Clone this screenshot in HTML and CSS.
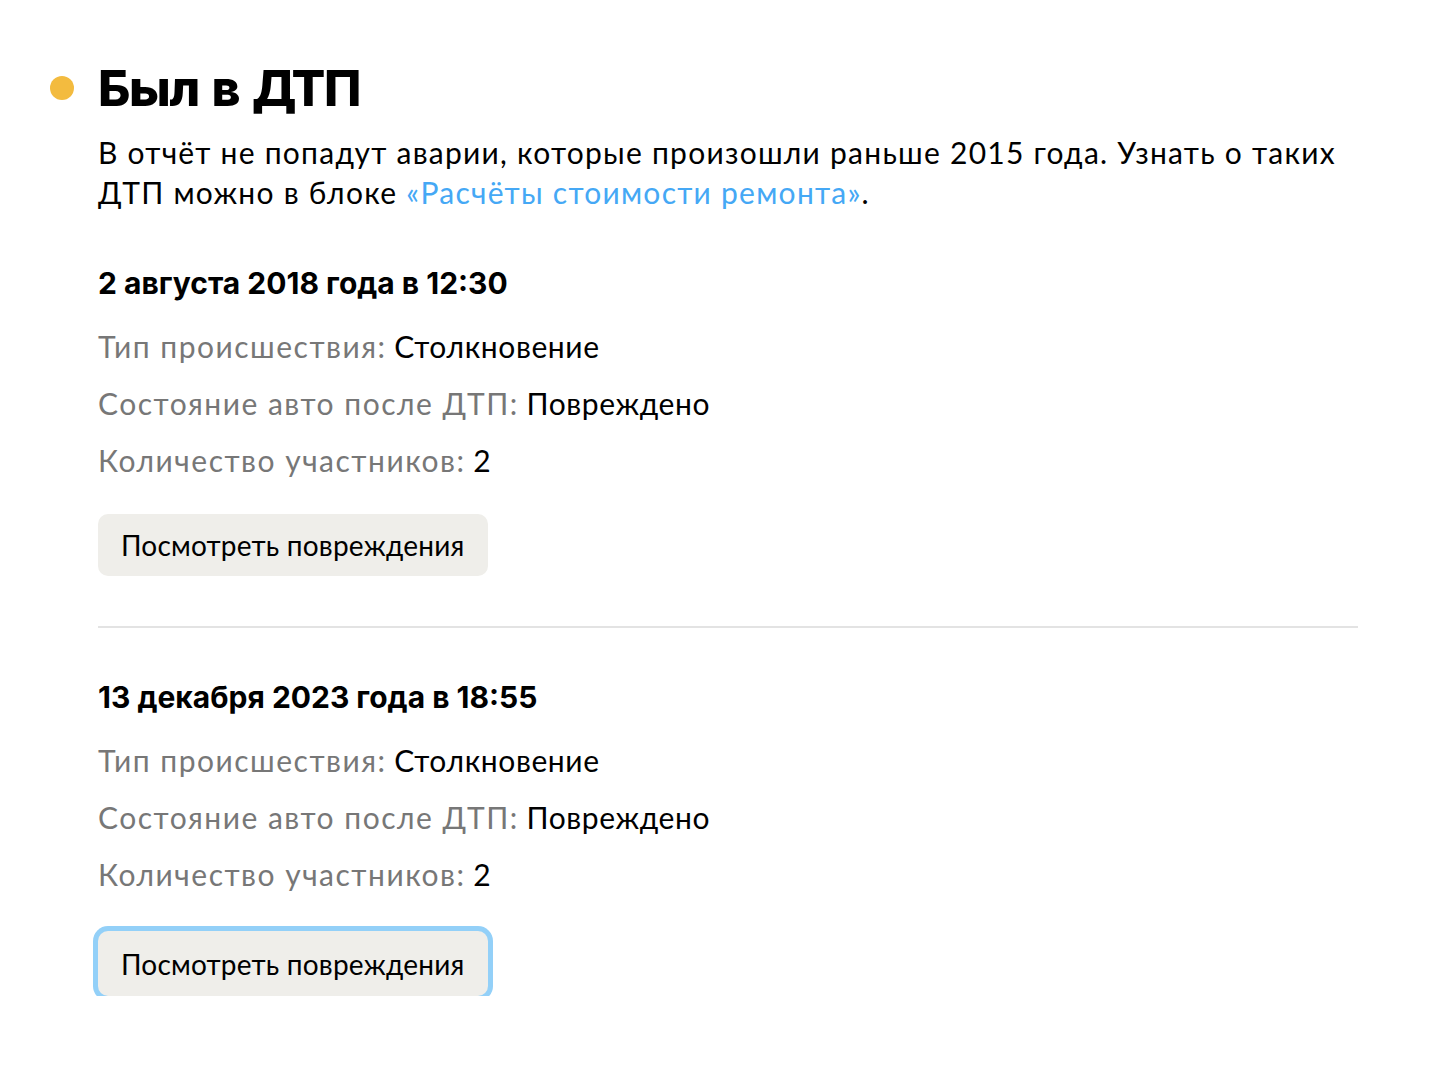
FILE: index.html
```html
<!DOCTYPE html>
<html lang="ru">
<head>
<meta charset="utf-8">
<link rel="stylesheet" href="styles.css">
</head>
<body>
<section class="block">
  <div class="title-row">
    <span class="dot"></span>
    <h1 class="title">Был в ДТП</h1>
  </div>
  <div class="content">
    <p class="intro">В отчёт не попадут аварии, которые произошли раньше 2015 года. Узнать о таких ДТП можно в блоке <a class="link" href="#">«Расчёты стоимости ремонта»</a>.</p>

    <div class="accident">
      <h2 class="date">2 августа 2018 года в 12:30</h2>
      <div class="row"><span class="label">Тип происшествия:</span> <span class="value">Столкновение</span></div>
      <div class="row"><span class="label">Состояние авто после ДТП:</span> <span class="value">Повреждено</span></div>
      <div class="row"><span class="label">Количество участников:</span> <span class="value">2</span></div>
      <button class="btn">Посмотреть повреждения</button>
    </div>

    <hr class="divider">

    <div class="accident accident-second">
      <h2 class="date">13 декабря 2023 года в 18:55</h2>
      <div class="row"><span class="label">Тип происшествия:</span> <span class="value">Столкновение</span></div>
      <div class="row"><span class="label">Состояние авто после ДТП:</span> <span class="value">Повреждено</span></div>
      <div class="row"><span class="label">Количество участников:</span> <span class="value">2</span></div>
      <button class="btn btn-focus">Посмотреть повреждения</button>
    </div>
  </div>
</section>
</body>
</html>
```

FILE: styles.css
```css
* { box-sizing: border-box; }
html, body { margin: 0; padding: 0; background: #fff; }
body {
  font-family: Lato, "Noto Sans", sans-serif;
  color: #000;
}
.block {
  padding: 56px 72px 0 50px;
}
.title-row {
  display: flex;
  align-items: center;
  gap: 24px;
}
.dot {
  width: 24px;
  height: 24px;
  border-radius: 50%;
  background: #f3bb3f;
  flex: none;
}
.title {
  margin: 0;
  font-family: Inter, sans-serif;
  font-weight: 800;
  font-size: 50px;
  line-height: 64px;
  letter-spacing: -1.3px;
  word-spacing: 3px;
}
.content {
  padding-left: 48px;
}
.intro {
  margin: 12px 0 0;
  font-size: 30px;
  line-height: 40px;
  letter-spacing: 1.25px;
  max-width: 1260px;
}
.link {
  color: #45a8f5;
  text-decoration: none;
}
.accident {
  padding-top: 51px;
}
.accident-second {
  padding-top: 49px;
}
.date {
  margin: 0 0 15px;
  font-family: Inter, sans-serif;
  font-weight: 700;
  font-size: 30px;
  line-height: 40px;
}
.row {
  font-size: 30px;
  line-height: 57px;
}
.label {
  color: #777;
  letter-spacing: 1.5px;
}
.value {
  color: #000;
  letter-spacing: 0.6px;
}
.btn {
  display: block;
  margin-top: 25px;
  font-family: Lato, sans-serif;
  font-size: 28px;
  letter-spacing: 0.2px;
  color: #000;
  background: #efeeea;
  border: none;
  border-radius: 10px;
  height: 62px;
  padding: 0 23px;
  cursor: pointer;
}
.btn-focus {
  margin-top: 28px;
  height: 65px;
  box-shadow: 0 0 0 5px #93d0f8;
}
.divider {
  margin: 50px 0 0;
  border: none;
  height: 2px;
  background: #e3e3e3;
  width: 1260px;
}
```
